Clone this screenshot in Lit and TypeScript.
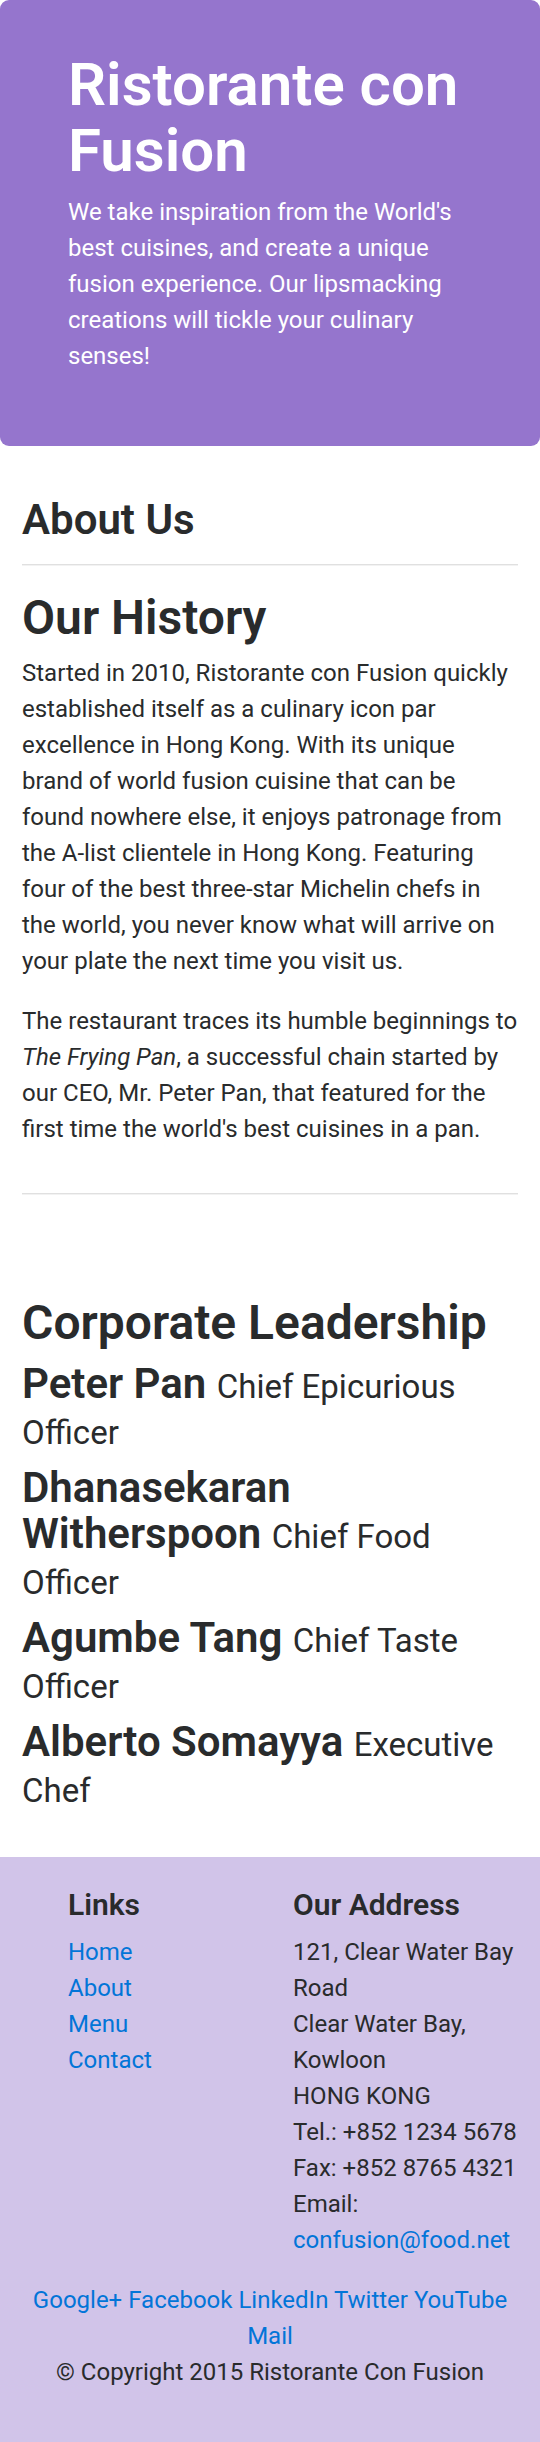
import { LitElement, html, css } from 'lit';
import { customElement } from 'lit/decorators.js';

const leaders = [
  { name: 'Peter Pan', role: 'Chief Epicurious Officer' },
  { name: 'Dhanasekaran Witherspoon', role: 'Chief Food Officer' },
  { name: 'Agumbe Tang', role: 'Chief Taste Officer' },
  { name: 'Alberto Somayya', role: 'Executive Chef' },
];

const pages = ['Home', 'About', 'Menu', 'Contact'];
const social = ['Google+', 'Facebook', 'LinkedIn', 'Twitter', 'YouTube', 'Mail'];

@customElement('app-root')
export class AppRoot extends LitElement {
  static styles = css`
    :host {
      display: block;
      background: #fff;
      color: #292b2c;
      font: 400 24px/36px Roboto, 'Liberation Sans', sans-serif;
    }
    h1, h2, h3, h5, p, ul, address {
      margin: 0;
      padding: 0;
    }
    h1, h2, h3, h5 {
      font-weight: 600;
    }
    h1 {
      font-size: 60px;
      line-height: 66px;
    }
    h2 {
      font-size: 48px;
      line-height: 53px;
    }
    h3 {
      font-size: 42px;
      line-height: 46px;
    }
    h5 {
      font-size: 30px;
      line-height: 33px;
      margin-bottom: 13px;
    }
    a {
      color: #0275d8;
      text-decoration: none;
    }
    .hero {
      padding: 52px 68px 72px;
      border-radius: 9px;
      background: #9575cd;
      color: #fff;
    }
    .hero h1 {
      margin-bottom: 10px;
    }
    main {
      padding: 51px 22px 46px;
    }
    hr {
      height: 1px;
      margin: 0;
      border: 0;
      border-bottom: 1px solid #f2f2f2;
      background: #e0e0e0;
    }
    .title {
      padding-bottom: 21px;
    }
    .history {
      display: flex;
      flex-direction: column;
      gap: 24px;
      padding: 25px 0 46px;
    }
    .history h2 {
      margin-bottom: -13px;
    }
    .leaders {
      display: flex;
      flex-direction: column;
      gap: 12px;
      padding-top: 101px;
    }
    .role {
      font-size: 33px;
      font-weight: 400;
      line-height: 33px;
    }
    footer {
      padding: 31px 22px 52px;
      background: #d1c4e9;
    }
    .columns {
      display: grid;
      grid-template-columns: 1fr 1fr;
      padding-left: 46px;
      margin-bottom: 24px;
    }
    ul {
      list-style: none;
    }
    address {
      font-style: normal;
    }
    .center {
      text-align: center;
    }
  `;

  render() {
    return html`
      <header class="hero">
        <h1>Ristorante con Fusion</h1>
        <p>We take inspiration from the World's best cuisines, and create a unique fusion experience. Our lipsmacking creations will tickle your culinary senses!</p>
      </header>
      <main>
        <h3 class="title">About Us</h3>
        <hr />
        <section class="history">
          <h2>Our History</h2>
          <p>Started in 2010, Ristorante con Fusion quickly established itself as a culinary icon par excellence in Hong Kong. With its unique brand of world fusion cuisine that can be found nowhere else, it enjoys patronage from the A-list clientele in Hong Kong. Featuring four of the best three-star Michelin chefs in the world, you never know what will arrive on your plate the next time you visit us.</p>
          <p>The restaurant traces its humble beginnings to <em>The Frying Pan</em>, a successful chain started by our CEO, Mr. Peter Pan, that featured for the first time the world's best cuisines in a pan.</p>
        </section>
        <hr />
        <section class="leaders">
          <h2>Corporate Leadership</h2>
          ${leaders.map((l) => html`<h3>${l.name} <span class="role">${l.role}</span></h3>`)}
        </section>
      </main>
      <footer>
        <div class="columns">
          <nav>
            <h5>Links</h5>
            <ul>
              ${pages.map((p) => html`<li><a href="#">${p}</a></li>`)}
            </ul>
          </nav>
          <div>
            <h5>Our Address</h5>
            <address>
              121, Clear Water Bay Road<br />
              Clear Water Bay, Kowloon<br />
              HONG KONG<br />
              Tel.: +852 1234 5678<br />
              Fax: +852 8765 4321<br />
              Email: <a href="mailto:confusion@food.net">confusion@food.net</a>
            </address>
          </div>
        </div>
        <p class="center">${social.map((s) => html`<a href="#">${s}</a> `)}</p>
        <p class="center">© Copyright 2015 Ristorante Con Fusion</p>
      </footer>
    `;
  }
}
